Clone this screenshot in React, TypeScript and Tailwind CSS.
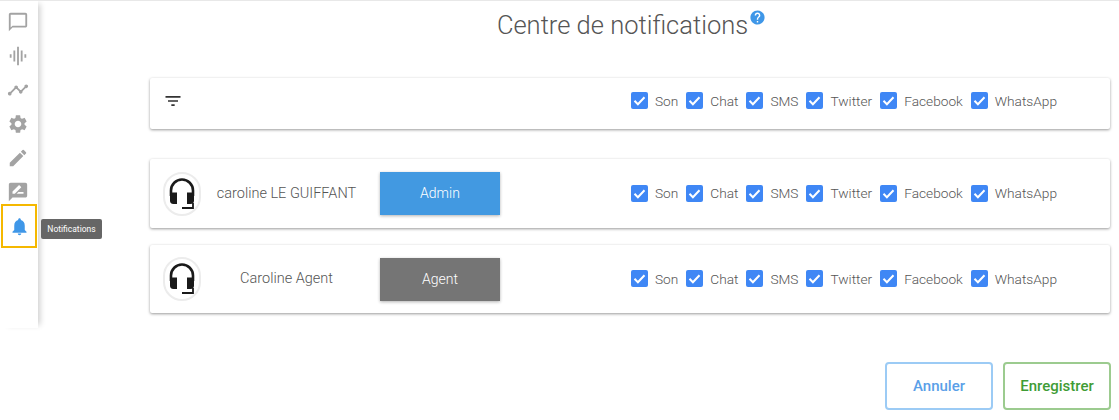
import React from "react";
import {
  MdChatBubbleOutline,
  MdGraphicEq,
  MdTimeline,
  MdSettings,
  MdEdit,
  MdRateReview,
  MdNotifications,
  MdFilterList,
  MdHelp,
} from "react-icons/md";

const channels = ["Son", "Chat", "SMS", "Twitter", "Facebook", "WhatsApp"];

function Channels() {
  return (
    <div className="flex items-center gap-[8px] ml-auto mr-[53px]">
      {channels.map((c) => (
        <label key={c} className="flex items-center gap-[7px] text-[13.7px] font-light text-[#555]">
          <span className="w-[17px] h-[17px] rounded-[2px] bg-[#3f87f5] flex items-center justify-center">
            <svg viewBox="0 0 17 17" className="w-[17px] h-[17px]">
              <path d="M3.5 8.8l3.4 3.4 6.6-7" fill="none" stroke="#fff" strokeWidth="2" />
            </svg>
          </span>
          {c}
        </label>
      ))}
    </div>
  );
}

function Headset() {
  return (
    <div className="w-[38px] h-[44px] rounded-full bg-white border-2 border-[#ececec] flex items-center justify-center shrink-0">
      <svg viewBox="0 0 26 32" className="w-[26px] h-[32px]">
        <path d="M2 18V12.500a11 11 0 0 1 22 0V18" fill="none" stroke="#1a1a1a" strokeWidth="2.6" />
        <path d="M1 17c0-1.500 1-2.500 2.500-2.500H8V26H4.500C2 26 1 24.500 1 22.500z" fill="#1a1a1a" />
        <path d="M25 17c0-1.500-1-2.500-2.500-2.500H18V26h3.500C24 26 25 24.500 25 22.500z" fill="#1a1a1a" />
        <path d="M24 25v5H13" fill="none" stroke="#1a1a1a" strokeWidth="1.8" />
      </svg>
    </div>
  );
}

function UserRow({ name, role, color, h }: { name: string; role: string; color: string; h: string }) {
  return (
    <div className={`${h} bg-white rounded-[2px] shadow-[0_1px_3px_rgba(0,0,0,0.4)] flex items-center pl-[13px]`}>
      <Headset />
      <div className="w-[171px] text-center text-[14.5px] font-light text-[#555]">{name}</div>
      <div className={`w-[120px] h-[43px] ml-[8px] flex items-center justify-center text-white text-[14px] font-light shadow-[0_1px_3px_rgba(0,0,0,0.3)] ${color}`}>
        {role}
      </div>
      <Channels />
    </div>
  );
}

export default function App() {
  const icons = [MdChatBubbleOutline, MdGraphicEq, MdTimeline, MdSettings, MdEdit, MdRateReview];
  return (
    <div className="relative w-[1119px] h-[420px] overflow-hidden bg-white border-t border-[#e8e8e8] font-['Roboto',sans-serif] flex">
      <aside className="w-[38px] h-[327px] bg-white shadow-[5px_0_6px_-3px_rgba(0,0,0,0.2)] flex flex-col pt-[4px] shrink-0 relative">
        {icons.map((Icon, i) => (
          <div key={i} className="h-[34px] w-full flex items-center justify-center pr-[2px]">
            <Icon className="w-[22px] h-[22px] text-[#a3a3a3]" />
          </div>
        ))}
        <div className="-mt-[5px] ml-[1px] w-[36px] h-[44px] border-2 border-[#f5b800] flex items-center justify-center">
          <MdNotifications className="w-[21px] h-[21px] text-[#3f97e8]" />
        </div>
        <div className="absolute left-[41px] top-[217px] w-[61px] h-[20px] mt-[1px] bg-[#666] rounded-[2px] text-white text-[8.500px] flex items-center justify-center whitespace-nowrap">
          Notifications
        </div>
      </aside>
      <main className="flex-1 flex flex-col pl-[112px] pr-[9px]">
        <h1 className="h-[77px] pt-[7px] pl-[3px] flex justify-center items-start text-[25.5px] leading-[34px] text-[#555] font-light">
          <span>Centre de notifications</span>
          <MdHelp className="w-[17px] h-[17px] text-[#3f97e8] mt-[1px] ml-[1px]" />
        </h1>
        <div className="h-[51px] pb-[5px] bg-white rounded-[2px] shadow-[0_1px_3px_rgba(0,0,0,0.4)] flex items-center pl-[13px]">
          <MdFilterList className="w-[20px] h-[20px] text-[#333]" />
          <Channels />
        </div>
        <div className="mt-[30px] flex flex-col gap-[17px]">
          <UserRow name="caroline LE GUIFFANT" role="Admin" color="bg-[#4299e1]" h="h-[69px]" />
          <UserRow name="Caroline Agent" role="Agent" color="bg-[#757575]" h="h-[68px]" />
        </div>
        <div className="mt-[49px] flex justify-end gap-[10px] -mr-[1px]">
          <button className="w-[108px] h-[48px] rounded-[4px] border-2 border-[#9ccbf5] text-[#5a9fe8] text-[15px] font-medium">Annuler</button>
          <button className="w-[108px] h-[48px] rounded-[4px] border-2 border-[#9ccb8f] text-[#3f9c35] text-[15px] font-medium">Enregistrer</button>
        </div>
      </main>
    </div>
  );
}
